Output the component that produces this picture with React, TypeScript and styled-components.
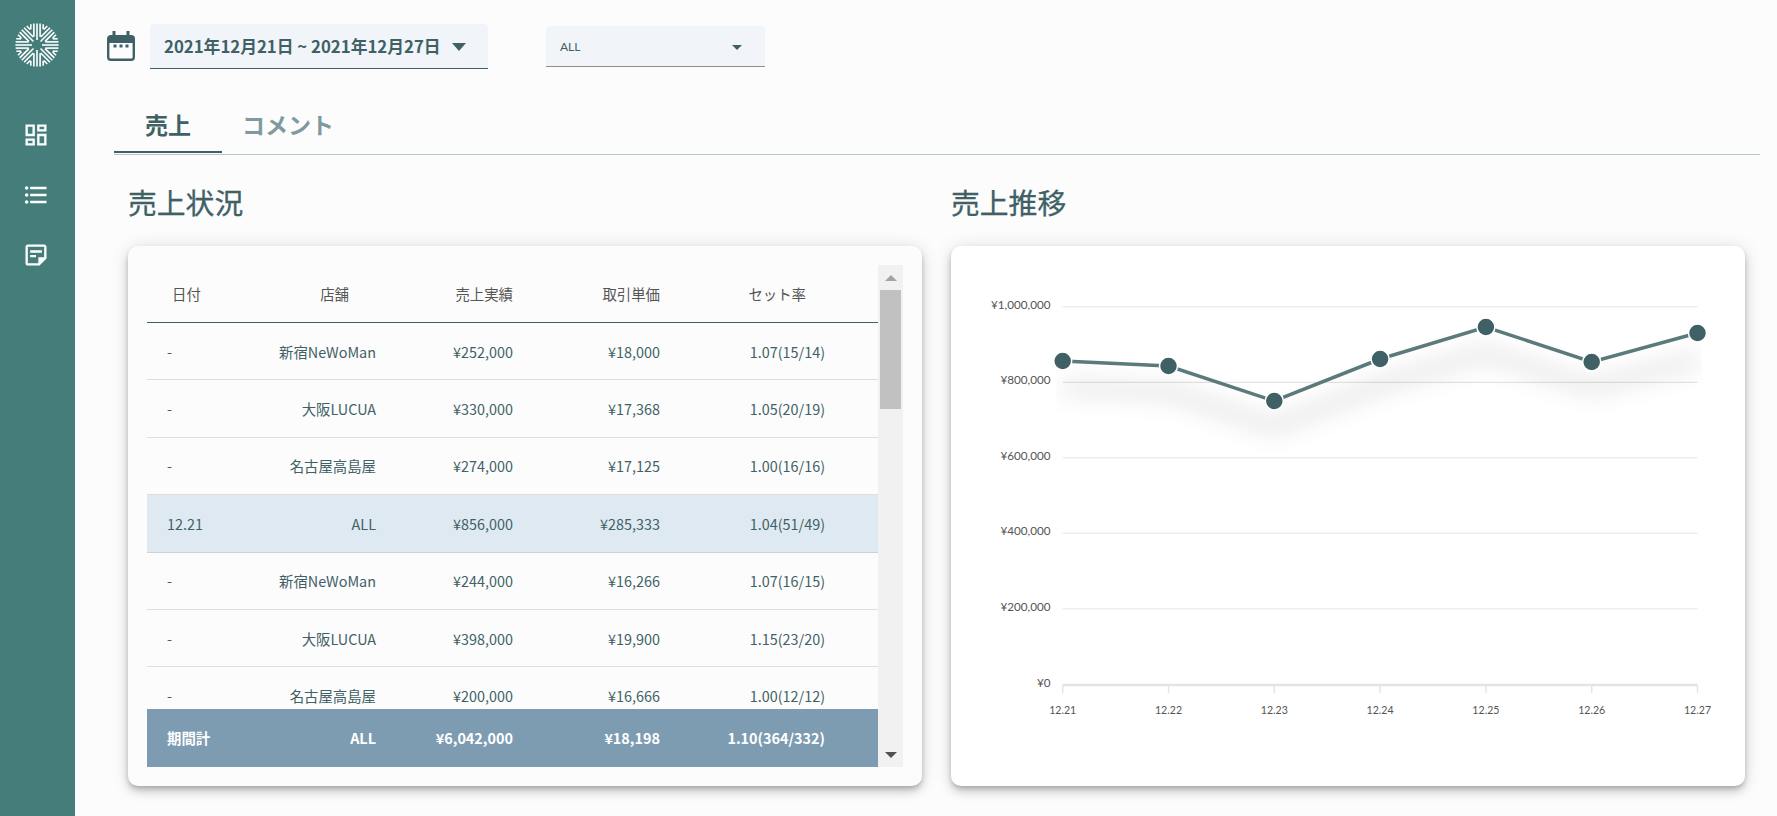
import React from 'react';
import styled, { createGlobalStyle } from 'styled-components';

const GlobalStyle = createGlobalStyle`
  html, body {
    margin: 0;
    height: 100%;
    overflow: hidden;
    background: #fcfcfc;
    font-family: "Noto Sans CJK JP", "Noto Sans", sans-serif;
    color: #3f6166;
  }
  * {
    box-sizing: border-box;
  }
`;

const Page = styled.div`
  display: flex;
  height: 816px;
`;

const Sidebar = styled.nav`
  width: 75px;
  flex-shrink: 0;
  background: #457d7b;
  display: flex;
  flex-direction: column;
  align-items: center;
  padding-top: 23px;
`;

const LogoWrap = styled.div`
  margin-left: -2px;
  height: 44px;
`;

const LogoSvg = styled.svg`
  display: block;
`;

const NavList = styled.div`
  display: flex;
  flex-direction: column;
  gap: 32px;
  margin-top: 54px;
  margin-left: -4px;
`;

const NavIcon = styled.svg`
  width: 28px;
  height: 28px;
  display: block;
  fill: #fff;
`;

const Main = styled.main`
  flex: 1;
  min-width: 0;
  padding: 24px 17px 0 39px;
`;

const Toolbar = styled.div`
  display: flex;
  align-items: flex-start;
  margin-left: -7px;
  height: 76px;
`;

const CalendarIcon = styled.svg`
  width: 28px;
  height: 30px;
  margin: 7px 15px 0 0;
  display: block;
`;

const DateField = styled.div`
  width: 338px;
  height: 45px;
  background: #f1f5f9;
  border-bottom: 1px solid #3f6166;
  border-radius: 4px 4px 0 0;
  display: flex;
  align-items: center;
  justify-content: space-between;
  padding: 0 22px 0 14px;
  font-size: 16.8px;
  font-weight: 700;
  white-space: nowrap;
`;

const SelectField = styled.div`
  width: 219px;
  height: 41px;
  margin: 2px 0 0 58px;
  background: #f1f5f9;
  border-bottom: 1px solid #8f8f8f;
  border-radius: 4px 4px 0 0;
  display: flex;
  align-items: center;
  justify-content: space-between;
  padding: 0 23px 0 14px;
  font-family: Lato, sans-serif;
  font-size: 12px;
`;

const Caret = styled.span<{ $w: number; $h: number }>`
  width: 0;
  height: 0;
  margin-top: 2px;
  border-left: ${p => p.$w / 2}px solid transparent;
  border-right: ${p => p.$w / 2}px solid transparent;
  border-top: ${p => p.$h}px solid #3f6166;
`;

const TabBar = styled.div`
  display: flex;
  height: 55px;
  border-bottom: 1px solid #b5c8cc;
`;

const Tab = styled.div<{ $active?: boolean }>`
  min-width: 108px;
  height: 53px;
  padding: 0 20px 4px;
  display: flex;
  align-items: center;
  justify-content: center;
  font-size: 23px;
  font-weight: 700;
  color: ${p => (p.$active ? '#3f6166' : '#7e9a9e')};
  border-bottom: 2px solid ${p => (p.$active ? '#3f6166' : 'transparent')};
`;

const Columns = styled.div`
  display: grid;
  grid-template-columns: 794px 794px;
  column-gap: 29px;
  padding-left: 14px;
`;

const Section = styled.section`
  display: flex;
  flex-direction: column;
`;

const Heading = styled.h2`
  margin: 0;
  height: 91px;
  padding: 24px 0 0 0;
  font-size: 28.8px;
  line-height: 46px;
  font-weight: 400;
  color: #3f6166;
  -webkit-text-stroke: 0.3px #3f6166;
`;

const Card = styled.div<{ $bg: string }>`
  height: 540px;
  border-radius: 10px;
  background: ${p => p.$bg};
  box-shadow: 0 3px 5px -1px rgba(0, 0, 0, 0.2), 0 6px 10px 0 rgba(0, 0, 0, 0.14), 0 1px 18px 0 rgba(0, 0, 0, 0.12);
`;

const TableCard = styled(Card)`
  padding: 19px;
  display: flex;
`;

const TableArea = styled.div`
  flex: 1;
  min-width: 0;
  display: flex;
  flex-direction: column;
`;

const TableBody = styled.div`
  flex: 1;
  min-height: 0;
  overflow: hidden;
`;

const Row = styled.div<{ $kind?: 'head' | 'day' | 'total' }>`
  display: grid;
  grid-template-columns: 93px 136px 137px 147px 165px 53px;
  align-items: center;
  flex-shrink: 0;
  font-size: 14.4px;
  height: ${p => (p.$kind === 'head' || p.$kind === 'total' ? '58px' : '57.4px')};
  background: ${p => (p.$kind === 'day' ? '#dfe9f2' : p.$kind === 'total' ? '#7d9cb2' : 'transparent')};
  color: ${p => (p.$kind === 'head' ? '#555' : p.$kind === 'total' ? '#fff' : '#3f6166')};
  font-weight: ${p => (p.$kind === 'total' ? 700 : 400)};
  border-bottom: 1px solid ${p => (p.$kind === 'head' ? '#3f6166' : p.$kind === 'day' ? '#c7d3db' : p.$kind === 'total' ? 'transparent' : '#dedede')};
`;

const Cell = styled.div<{ $left?: boolean; $pad?: number }>`
  text-align: ${p => (p.$left ? 'left' : 'right')};
  padding-left: ${p => (p.$left ? p.$pad ?? 20 : 0)}px;
  padding-right: ${p => (p.$left ? 0 : p.$pad ?? 0)}px;
  white-space: nowrap;
`;

const ScrollTrack = styled.div`
  width: 25px;
  background: #f1f1f1;
  display: flex;
  flex-direction: column;
  align-items: center;
`;

const ScrollArrow = styled.div<{ $down?: boolean }>`
  height: 25px;
  flex-shrink: 0;
  display: flex;
  align-items: center;
  justify-content: center;
  &::before {
    content: '';
    width: 0;
    height: 0;
    border-left: 6px solid transparent;
    border-right: 6px solid transparent;
    border-bottom: ${p => (p.$down ? '0' : '6px solid #a3a3a3')};
    border-top: ${p => (p.$down ? '6px solid #505050' : '0')};
  }
`;

const ScrollThumb = styled.div`
  width: 21px;
  height: 119px;
  background: #c1c1c1;
  flex-shrink: 0;
`;

const ScrollRest = styled.div`
  flex: 1;
`;

const ChartSvg = styled.svg`
  width: 794px;
  height: 540px;
  display: block;
`;

const AxisText = styled.text<{ $small?: boolean }>`
  font-family: Lato, sans-serif;
  font-size: ${p => (p.$small ? '10.6px' : '11.7px')};
  fill: #555;
`;

type SaleRow = [string, string, string, string, string];

const rows: { kind?: 'day'; cells: SaleRow }[] = [
  { cells: ['-', '新宿NeWoMan', '¥252,000', '¥18,000', '1.07(15/14)'] },
  { cells: ['-', '大阪LUCUA', '¥330,000', '¥17,368', '1.05(20/19)'] },
  { cells: ['-', '名古屋高島屋', '¥274,000', '¥17,125', '1.00(16/16)'] },
  { kind: 'day', cells: ['12.21', 'ALL', '¥856,000', '¥285,333', '1.04(51/49)'] },
  { cells: ['-', '新宿NeWoMan', '¥244,000', '¥16,266', '1.07(16/15)'] },
  { cells: ['-', '大阪LUCUA', '¥398,000', '¥19,900', '1.15(23/20)'] },
  { cells: ['-', '名古屋高島屋', '¥200,000', '¥16,666', '1.00(12/12)'] },
];

const yAxis = [
  { label: '¥1,000,000', y: 60.7, w: 1.6, c: '#eeeeee' },
  { label: '¥800,000', y: 136.3, w: 1, c: '#dddddd' },
  { label: '¥600,000', y: 211.7, w: 1.6, c: '#eeeeee' },
  { label: '¥400,000', y: 287.2, w: 1.6, c: '#eeeeee' },
  { label: '¥200,000', y: 362.7, w: 1.6, c: '#eeeeee' },
];

const points = [
  { label: '12.21', y: 115 },
  { label: '12.22', y: 120 },
  { label: '12.23', y: 155 },
  { label: '12.24', y: 113 },
  { label: '12.25', y: 81 },
  { label: '12.26', y: 116 },
  { label: '12.27', y: 87 },
].map((p, i) => ({ ...p, x: 111.7 + i * 105.8 }));

const linePoints = points.map(p => `${p.x},${p.y}`).join(' ');

const LogoMark = () => {
  const wedges = [0, 45, 90, 135, 180, 225, 270, 315];
  const offsets = [-6.2, -3.1, 0, 3.1, 6.2];
  const R = 21.6;
  return (
    <LogoSvg width="44" height="44" viewBox="-22 -22 44 44">
      {wedges.map(a => (
        <g key={a} transform={`rotate(${a})`}>
          {offsets.map(d => (
            <line
              key={d}
              x1={d}
              x2={d}
              y1={-Math.max(5, Math.abs(d) / Math.tan(Math.PI / 8) + 0.8)}
              y2={-Math.sqrt(R * R - d * d)}
              stroke="#fff"
              strokeWidth="1.6"
            />
          ))}
        </g>
      ))}
    </LogoSvg>
  );
};

const Calendar = () => (
  <CalendarIcon viewBox="0 0 28 30">
    <rect x="1.2" y="5.2" width="25.6" height="23.6" rx="2.5" fill="none" stroke="#3f6166" strokeWidth="2.4" />
    <rect x="1" y="5" width="26" height="7" fill="#3f6166" />
    <rect x="5.5" y="0" width="3" height="6" fill="#3f6166" />
    <rect x="19.5" y="0" width="3" height="6" fill="#3f6166" />
    <rect x="6.5" y="13.5" width="3" height="3" fill="#3f6166" />
    <rect x="12.5" y="13.5" width="3" height="3" fill="#3f6166" />
    <rect x="18.5" y="13.5" width="3" height="3" fill="#3f6166" />
  </CalendarIcon>
);

const SalesChart = () => (
  <ChartSvg viewBox="0 0 794 540">
    <defs>
      <filter id="lineBlur" x="-20%" y="-300%" width="140%" height="700%">
        <feGaussianBlur stdDeviation="12" />
      </filter>
      <clipPath id="shadowClip">
        <rect x="105" y="60" width="646" height="320" />
      </clipPath>
    </defs>
    {yAxis.map(t => (
      <g key={t.label}>
        <line x1="111.7" x2="746.5" y1={t.y} y2={t.y} stroke={t.c} strokeWidth={t.w} />
        <AxisText x="99.5" y={t.y + 2} textAnchor="end">{t.label}</AxisText>
      </g>
    ))}
    <line x1="111.7" x2="746.5" y1="439" y2="439" stroke="#e4e4e4" strokeWidth="2.4" />
    <AxisText x="99.5" y="441" textAnchor="end">¥0</AxisText>
    {points.map(p => (
      <g key={p.label}>
        <line x1={p.x} x2={p.x} y1="439" y2="447" stroke="#e4e4e4" strokeWidth="1.4" />
        <AxisText $small x={p.x} y="468" textAnchor="middle">{p.label}</AxisText>
      </g>
    ))}
    <g clipPath="url(#shadowClip)">
      <polyline
        points={linePoints}
        transform="translate(0 26)"
        fill="none"
        stroke="#000"
        strokeOpacity="0.4"
        strokeWidth="3.5"
        filter="url(#lineBlur)"
      />
    </g>
    <polyline points={linePoints} fill="none" stroke="#5a7a7c" strokeWidth="3.5" />
    {points.map(p => (
      <circle key={p.label} cx={p.x} cy={p.y} r="9" fill="#3f6166" stroke="#fff" strokeWidth="1.5" />
    ))}
  </ChartSvg>
);

const App = () => {
  return (
    <Page>
      <GlobalStyle />
      <Sidebar>
        <LogoWrap>
          <LogoMark />
        </LogoWrap>
        <NavList>
          <NavIcon viewBox="0 0 24 24">
            <path d="M19 5v2h-4V5h4M9 5v6H5V5h4m10 8v6h-4v-6h4M9 17v2H5v-2h4M21 3h-8v6h8V3zM11 3H3v10h8V3zm10 8h-8v10h8V11zm-10 4H3v6h8v-6z" />
          </NavIcon>
          <NavIcon viewBox="0 0 24 24">
            <path d="M4 10.5c-.83 0-1.5.67-1.5 1.5s.67 1.5 1.5 1.5 1.5-.67 1.5-1.5-.67-1.5-1.5-1.5zm0-6c-.83 0-1.5.67-1.5 1.5S3.17 7.5 4 7.5 5.5 6.83 5.5 6 4.83 4.5 4 4.5zm0 12c-.83 0-1.5.68-1.5 1.5s.68 1.5 1.5 1.5 1.5-.68 1.5-1.5-.67-1.5-1.5-1.5zM7 19h14v-2H7v2zm0-6h14v-2H7v2zm0-8v2h14V5H7z" />
          </NavIcon>
          <NavIcon viewBox="0 0 24 24">
            <path d="M19 5v9h-5v5H5V5h14m0-2H5c-1.1 0-2 .9-2 2v14c0 1.1.9 2 2 2h10l6-6V5c0-1.1-.9-2-2-2zm-7 11H7v-2h5v2zm5-4H7V8h10v2z" />
          </NavIcon>
        </NavList>
      </Sidebar>
      <Main>
        <Toolbar>
          <Calendar />
          <DateField>
            <span>2021年12月21日 ~ 2021年12月27日</span>
            <Caret $w={15} $h={8} />
          </DateField>
          <SelectField>
            <span>ALL</span>
            <Caret $w={10} $h={5} />
          </SelectField>
        </Toolbar>
        <TabBar>
          <Tab $active>売上</Tab>
          <Tab>コメント</Tab>
        </TabBar>
        <Columns>
          <Section>
            <Heading>売上状況</Heading>
            <TableCard $bg="#fcfcfc">
              <TableArea>
                <Row $kind="head">
                  <Cell $left $pad={25}>日付</Cell>
                  <Cell $pad={27}>店舗</Cell>
                  <Cell>売上実績</Cell>
                  <Cell>取引単価</Cell>
                  <Cell $pad={19}>セット率</Cell>
                </Row>
                <TableBody>
                  {rows.map((r, i) => (
                    <Row key={i} $kind={r.kind}>
                      <Cell $left>{r.cells[0]}</Cell>
                      <Cell>{r.cells[1]}</Cell>
                      <Cell>{r.cells[2]}</Cell>
                      <Cell>{r.cells[3]}</Cell>
                      <Cell>{r.cells[4]}</Cell>
                    </Row>
                  ))}
                </TableBody>
                <Row $kind="total">
                  <Cell $left>期間計</Cell>
                  <Cell>ALL</Cell>
                  <Cell>¥6,042,000</Cell>
                  <Cell>¥18,198</Cell>
                  <Cell>1.10(364/332)</Cell>
                </Row>
              </TableArea>
              <ScrollTrack>
                <ScrollArrow />
                <ScrollThumb />
                <ScrollRest />
                <ScrollArrow $down />
              </ScrollTrack>
            </TableCard>
          </Section>
          <Section>
            <Heading>売上推移</Heading>
            <Card $bg="#ffffff">
              <SalesChart />
            </Card>
          </Section>
        </Columns>
      </Main>
    </Page>
  );
};

export default App;
